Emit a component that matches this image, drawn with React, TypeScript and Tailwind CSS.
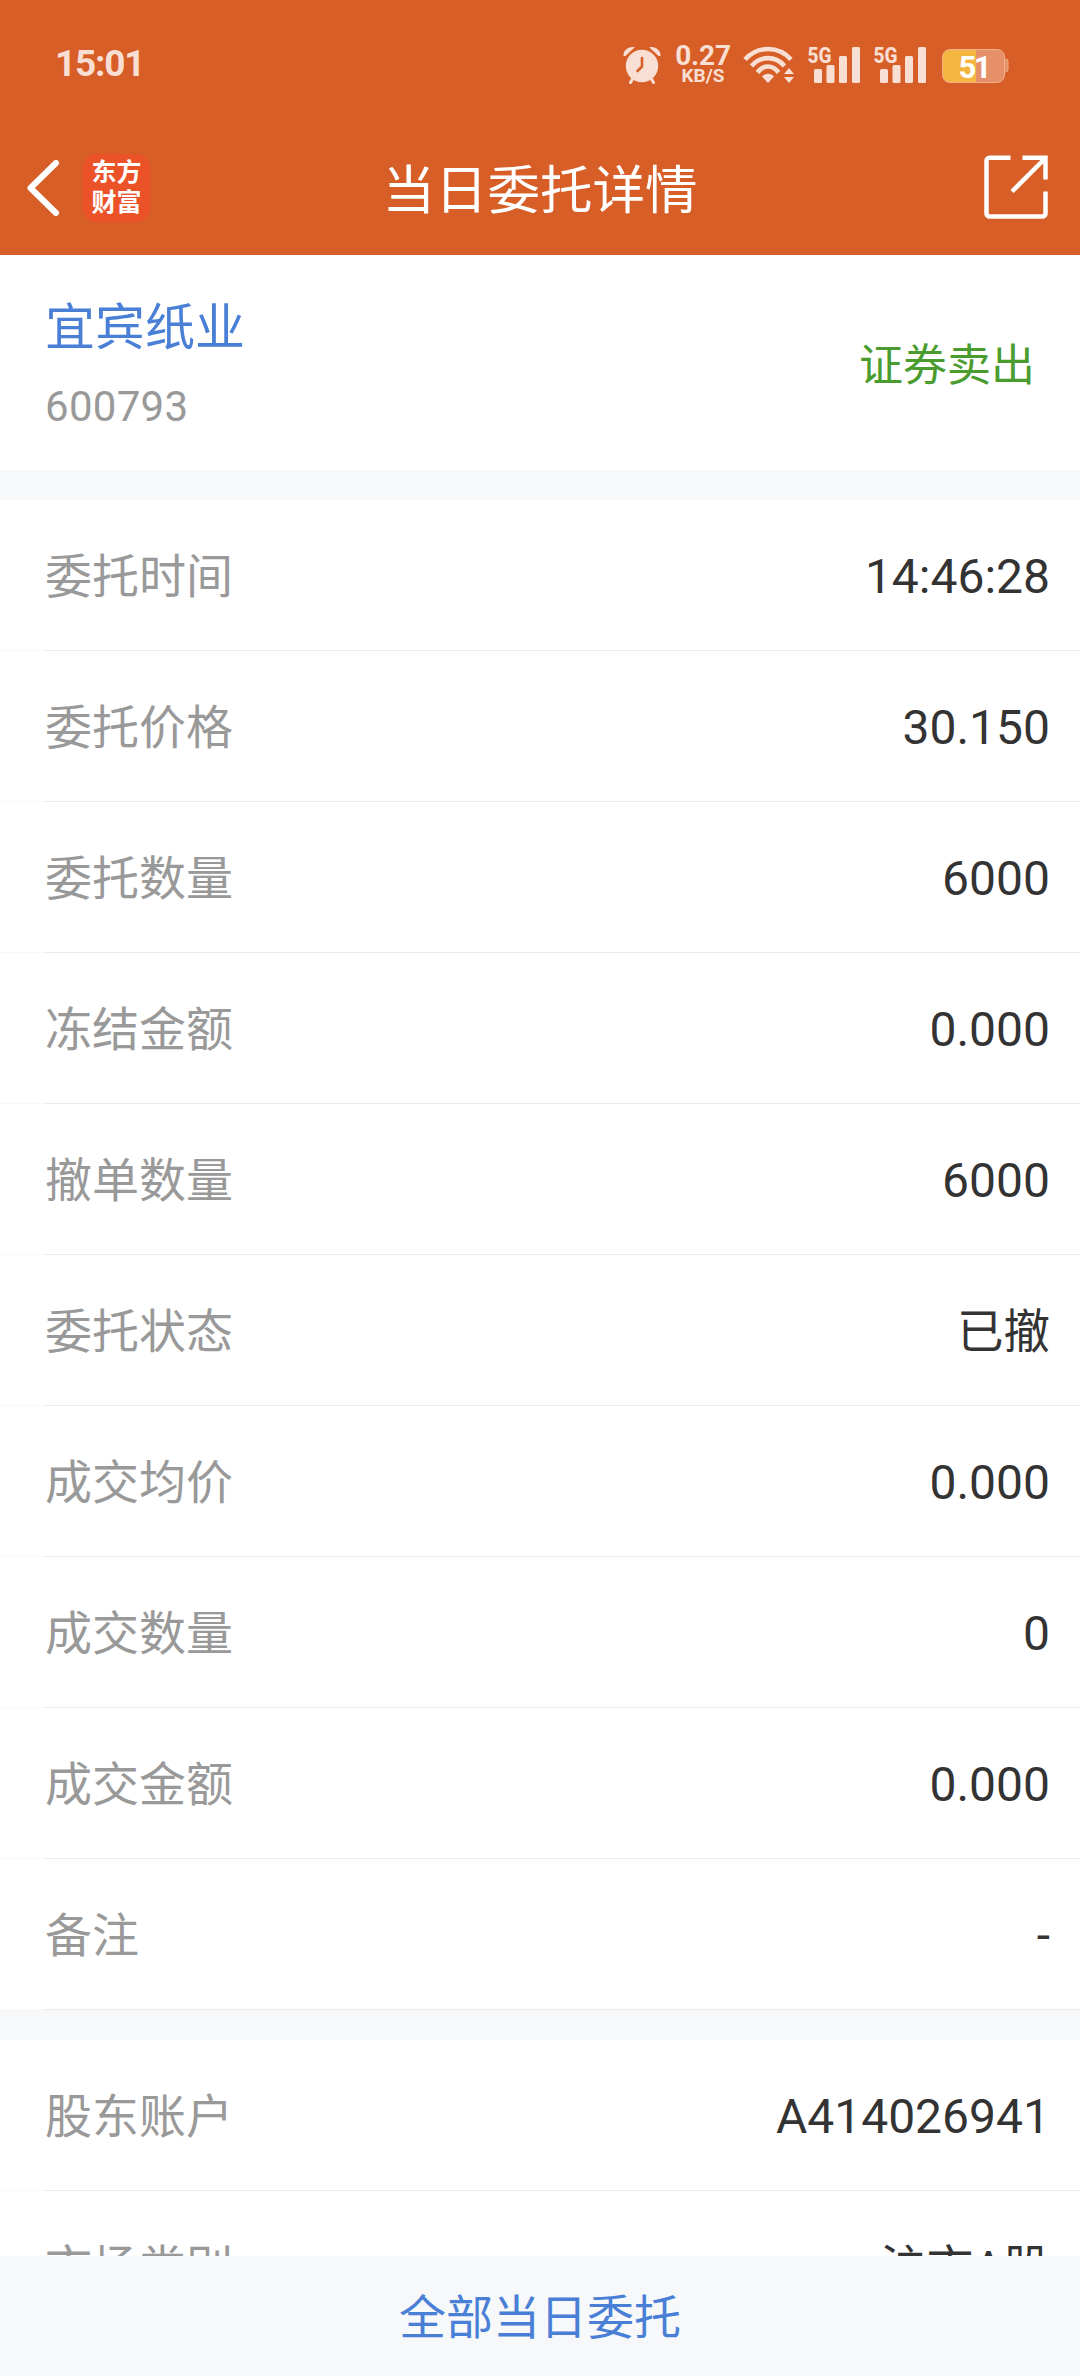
interface Field {
  label: string;
  value: string;
}

const orderFields: Field[] = [
  { label: '委托时间', value: '14:46:28' },
  { label: '委托价格', value: '30.150' },
  { label: '委托数量', value: '6000' },
  { label: '冻结金额', value: '0.000' },
  { label: '撤单数量', value: '6000' },
  { label: '委托状态', value: '已撤' },
  { label: '成交均价', value: '0.000' },
  { label: '成交数量', value: '0' },
  { label: '成交金额', value: '0.000' },
  { label: '备注', value: '-' },
];

const accountFields: Field[] = [
  { label: '股东账户', value: 'A414026941' },
  { label: '市场类别', value: '沪市A股' },
];

function AlarmIcon() {
  return (
    <svg width="38" height="38" viewBox="0 0 38 38" fill="none">
      <circle cx="19" cy="20" r="16.2" fill="#f9dfd3" />
      <path d="M0.500 9.800C0 4.500 5.500 -0.300 11.800 1.200L2.200 10.300ZM37.500 9.800C38 4.500 32.500 -0.300 26.200 1.200L35.800 10.300Z" fill="#f9dfd3" />
      <path d="M9.500 33L7.500 36.500M28.500 33L30.500 36.500" stroke="#f9dfd3" strokeWidth="3" strokeLinecap="round" />
      <path d="M19 12V20.500L14.500 25" stroke="#d65e27" strokeWidth="2.600" strokeLinecap="round" strokeLinejoin="round" />
    </svg>
  );
}

function WifiIcon() {
  return (
    <svg width="51" height="38" viewBox="0 0 51 38" fill="none">
      <path d="M2 13.500C14.500 -0.500 35.500 -0.500 48 13.500" stroke="#f9dfd3" strokeWidth="4.600" />
      <path d="M8.500 20C17.500 9.500 32.500 9.500 41.500 20" stroke="#f9dfd3" strokeWidth="4.600" />
      <path d="M14.500 26.500C20.500 18.500 29.500 18.500 35.500 26.500" stroke="#f9dfd3" strokeWidth="4.600" />
      <path d="M19 30.500C22 26.800 28 26.800 31 30.500L25 37Z" fill="#f9dfd3" />
      <path d="M41 28L46 22L51 28ZM41 31L46 37L51 31Z" fill="#f9dfd3" />
    </svg>
  );
}

function SignalIcon() {
  return (
    <svg className="overflow-visible" width="53" height="38" viewBox="0 0 53 38" fill="#f9dfd3">
      <text x="-0.500" y="16.500" textLength="24" lengthAdjust="spacingAndGlyphs" fontFamily="Roboto, sans-serif" fontSize="22.500" fontWeight="800">
        5G
      </text>
      <rect x="6" y="23" width="8" height="14" rx="1.500" />
      <rect x="18.500" y="19" width="8" height="18" rx="1.500" />
      <rect x="31" y="10" width="8" height="27" rx="1.500" />
      <rect x="44" y="1" width="8" height="36" rx="1.500" />
    </svg>
  );
}

function BatteryIcon() {
  return (
    <svg width="67" height="36" viewBox="0 0 67 36">
      <path d="M62 11h1.500a2.500 2.500 0 0 1 2.500 2.500v8a2.500 2.500 0 0 1-2.500 2.500h-1.500z" fill="#e6906a" stroke="#f0ab8c" />
      <rect x="0.500" y="1.500" width="62" height="33" rx="7.500" fill="#e6906a" />
      <path d="M8 1.500H34V34.500H8a7.500 7.500 0 0 1-7.500-7.500V9A7.500 7.500 0 0 1 8 1.500z" fill="#f4b63f" />
      <rect x="0.500" y="1.500" width="62" height="33" rx="7.500" fill="none" stroke="#f3b08c" />
      <text x="16.500" y="29.500" textLength="33" fontFamily="Roboto, sans-serif" fontSize="31" fontWeight="700" fill="#fff">
        51
      </text>
    </svg>
  );
}

function StatusBar() {
  return (
    <div className="flex h-[119px] items-start justify-between pr-[71px] pl-[55px] text-[#f9dfd3]">
      <span className="mt-[42px] text-[37px] leading-[44px] font-bold tracking-[-1.2px]">15:01</span>
      <div className="mt-[46px] flex items-start">
        <AlarmIcon />
        <div className="ml-[13px] flex w-[58px] flex-col items-center font-bold">
          <span className="text-[28px] leading-[20px] tracking-[-0.200px]">0.27</span>
          <span className="text-[19px] leading-[20px]">KB/S</span>
        </div>
        <div className="ml-[11px]">
          <WifiIcon />
        </div>
        <div className="ml-[14px] flex gap-[13px]">
          <SignalIcon />
          <SignalIcon />
        </div>
        <div className="mt-[2px] ml-[15px]">
          <BatteryIcon />
        </div>
      </div>
    </div>
  );
}

function AppLogo() {
  return (
    <div className="flex h-[68px] w-[67px] flex-col items-center justify-center rounded-[14px] bg-[#eb5228] text-[25px] leading-[30px] font-bold text-white">
      <span>东方</span>
      <span>财富</span>
    </div>
  );
}

function NavBar() {
  return (
    <div className="grid h-[136px] grid-cols-3 items-center">
      <div className="flex items-center pt-px pl-[26px]">
        <svg width="34" height="58" viewBox="0 0 34 58" fill="none">
          <path d="M30 4L4.500 29L30 54" stroke="#fff" strokeWidth="6" strokeLinecap="round" strokeLinejoin="round" />
        </svg>
        <div className="ml-[23px]">
          <AppLogo />
        </div>
      </div>
      <h1 className="pt-[8px] text-center text-[52.500px] leading-[70px] whitespace-nowrap text-white">当日委托详情</h1>
      <div className="flex justify-end pr-[32px]">
        <svg width="64" height="64" viewBox="0 0 64 64" fill="none" stroke="#fff" strokeWidth="4.500">
          <path d="M26.500 2.800H5.500A3 3 0 0 0 2.500 5.800V58.500A3 3 0 0 0 5.500 61.500H58.500A3 3 0 0 0 61.500 58.500V36.500" />
          <path d="M38.500 2.800H61.500V24.500M61 3.500L28 36.500" />
        </svg>
      </div>
    </div>
  );
}

function FieldRow({ label, value }: Field) {
  // Chinese values are set slightly smaller than digits
  const valueSize = /[\u4e00-\u9fa5]/.test(value) ? 'text-[46.500px] pt-[5px]' : 'text-[48px] pt-[3px]';

  return (
    <div className="h-[151px]">
      <div className="flex h-[150px] items-center justify-between pr-[30px] pl-[45px]">
        <span className="pt-[4px] text-[47px] text-[#999999]">{label}</span>
        <span className={`${valueSize} text-[#333333]`}>{value}</span>
      </div>
      {/* divider is fainter under the left inset */}
      <div className="flex h-px">
        <div className="w-[45px] bg-[#f7f8fa]" />
        <div className="flex-1 bg-[#ebebeb]" />
      </div>
    </div>
  );
}

export default function App() {
  return (
    <div className="flex h-[2376px] w-[1080px] flex-col overflow-hidden bg-white font-[Roboto,'Noto_Sans_CJK_SC',sans-serif]">
      <header className="h-[255px] shrink-0 bg-[#d75e27]">
        <StatusBar />
        <NavBar />
      </header>

      <main className="min-h-0 flex-1 overflow-hidden">
        {/* Stock summary */}
        <section className="flex h-[215px] items-center justify-between pt-[7px] pr-[45px] pl-[45px]">
          <div className="flex flex-col">
            <span className="text-[50px] leading-[76px] text-[#4a7fd6]">宜宾纸业</span>
            <span className="mt-[6px] text-[42px] leading-[70px] tracking-[0.300px] text-[#999999]">600793</span>
          </div>
          <span className="text-[44px] text-[#4a9c2f]">证券卖出</span>
        </section>

        <div className="h-[30px] bg-[#f6f8fa]" />

        <section>
          {orderFields.map((field) => (
            <FieldRow key={field.label} {...field} />
          ))}
        </section>

        <div className="h-[30px] bg-[#f6f8fa]" />

        <section>
          {accountFields.map((field) => (
            <FieldRow key={field.label} {...field} />
          ))}
        </section>
      </main>

      <footer className="flex h-[120px] shrink-0 items-center justify-center bg-[#f6f8fa] pt-[4px]">
        <button className="text-[47px] text-[#4a7fd6]">全部当日委托</button>
      </footer>
    </div>
  );
}
